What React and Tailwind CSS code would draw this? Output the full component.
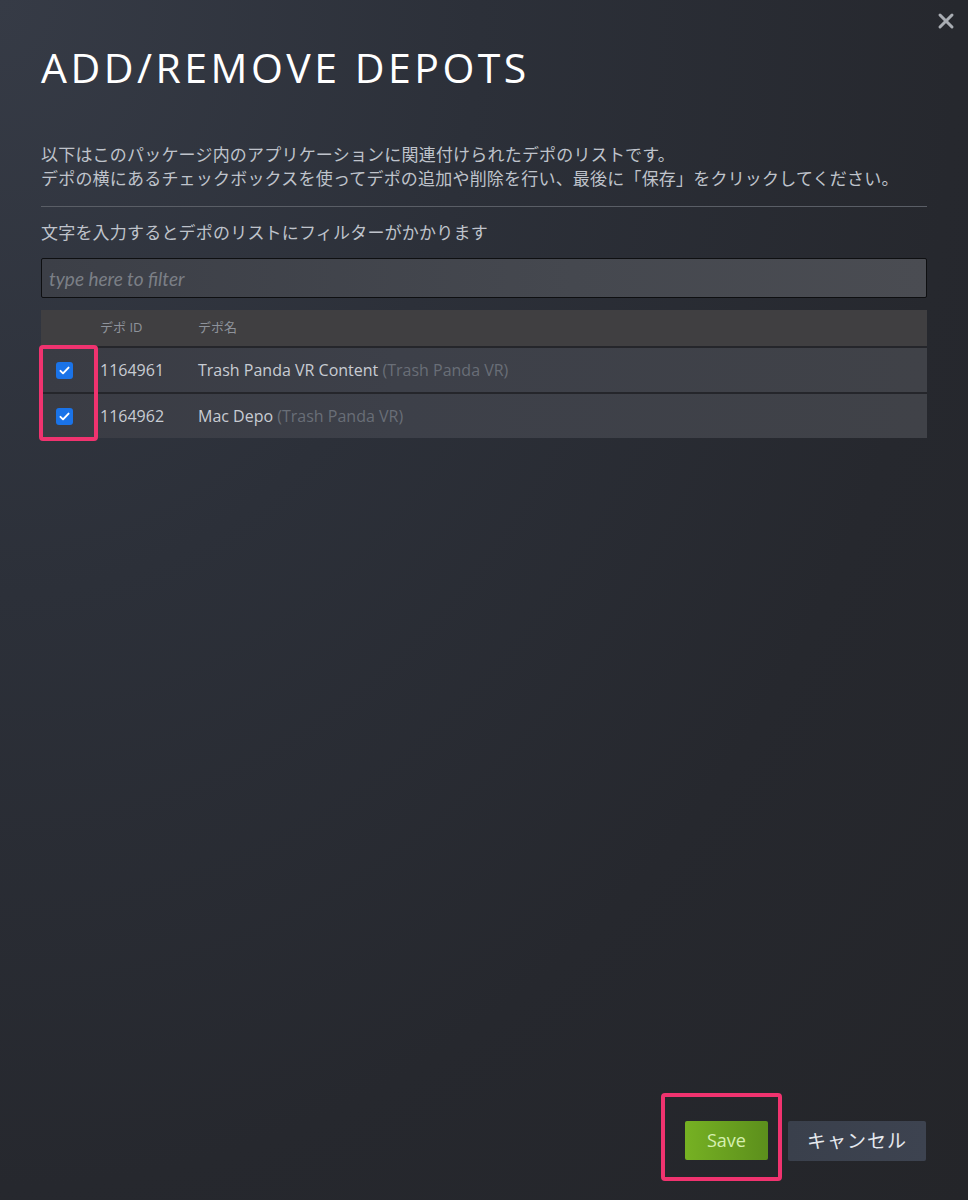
import { X } from 'lucide-react'

const depots = [
  { id: '1164961', name: 'Trash Panda VR Content', app: '(Trash Panda VR)' },
  { id: '1164962', name: 'Mac Depo', app: '(Trash Panda VR)' },
]

function CheckBox() {
  return (
    <span className="flex h-[17px] w-[17px] items-center justify-center rounded-[3px] bg-[#1a73e8]">
      <svg viewBox="0 0 16 16" className="h-[13px] w-[13px]" fill="none">
        <path d="M3 8.5l3.2 3L13 4.5" stroke="#fff" strokeWidth="2.4" strokeLinecap="round" strokeLinejoin="round" />
      </svg>
    </span>
  )
}

export default function App() {
  const cjk = { fontFamily: '"Open Sans", "Noto Sans CJK JP", sans-serif' }
  return (
    <div
      className="relative flex h-[1200px] w-[968px] flex-col overflow-hidden bg-[radial-gradient(ellipse_at_0%_0%,#363b46_0%,#2c3039_35%,#26282e_70%,#242529_100%)] px-[41px] text-[#c3c7ce]"
      style={cjk}
    >
      <button className="absolute right-[10px] top-[9px] text-[#a9adb3]">
        <X className="h-[24px] w-[24px]" strokeWidth={3} />
      </button>

      <h1 className="mt-[44px] text-[41px] font-normal leading-[46px] tracking-[3.5px] text-white">
        ADD/REMOVE DEPOTS
      </h1>

      <div className="mt-[53px] text-[17px] leading-[24px] tracking-[0.2px] text-[#bfc3cb]">
        <p>以下はこのパッケージ内のアプリケーションに関連付けられたデポのリストです。</p>
        <p>デポの横にあるチェックボックスを使ってデポの追加や削除を行い、最後に「保存」をクリックしてください。</p>
      </div>

      <div className="mt-[15px] h-px w-full bg-[#5a5e66]" />

      <p className="mt-[14px] text-[17px] leading-[24px] tracking-[0.2px] text-[#bfc3cb]">
        文字を入力するとデポのリストにフィルターがかかります
      </p>

      <input
        placeholder="type here to filter"
        className="mt-[13px] h-[40px] w-full rounded-[2px] border border-[#0e0f11] bg-[linear-gradient(90deg,#3c3f47,#45484f_60%,#4a4c52)] px-[7px] text-[19px] italic text-[#c3c7ce] outline-none placeholder:text-[#7b7f86]"
        style={{ fontFamily: 'Lato, sans-serif' }}
      />

      <div className="relative mt-[12px]">
        <div className="flex h-[36px] items-center bg-[#403f41] text-[13px] text-[#8e939b]">
          <div className="w-[59px]" />
          <div className="w-[98px]">デポ ID</div>
          <div>デポ名</div>
        </div>
        {depots.map((d) => (
          <div
            key={d.id}
            className="flex h-[46px] items-center border-t-2 border-[#25262b] bg-[linear-gradient(90deg,#3a3c44,#3d4049_40%,#404248)] text-[16px]"
          >
            <div className="flex w-[59px] pl-[15px]">
              <CheckBox />
            </div>
            <div className="w-[98px] text-[#c8ccd3]">{d.id}</div>
            <div className="text-[#c8ccd3]">
              {d.name} <span className="text-[#696e77]">{d.app}</span>
            </div>
          </div>
        ))}
        <div className="absolute left-[-2px] top-[35px] h-[96px] w-[59px] rounded-[4px] border-[4px] border-[#f0336f]" />
      </div>

      <div className="mt-auto mb-[39px] flex justify-end gap-[20px] pr-px">
        <div className="relative">
          <button className="h-[39px] w-[83px] rounded-[2px] bg-[linear-gradient(90deg,#76b123,#5c8f1c)] text-[18px] text-[#d6f0b0]">
            Save
          </button>
          <div className="absolute left-[-24px] top-[-28px] h-[88px] w-[121px] rounded-[4px] border-[4px] border-[#f0336f]" />
        </div>
        <button className="h-[40px] w-[138px] rounded-[2px] bg-[linear-gradient(90deg,#3a404c,#3d4350)] text-[19px] tracking-[1px] text-[#e6e9ee]">
          キャンセル
        </button>
      </div>
    </div>
  )
}
